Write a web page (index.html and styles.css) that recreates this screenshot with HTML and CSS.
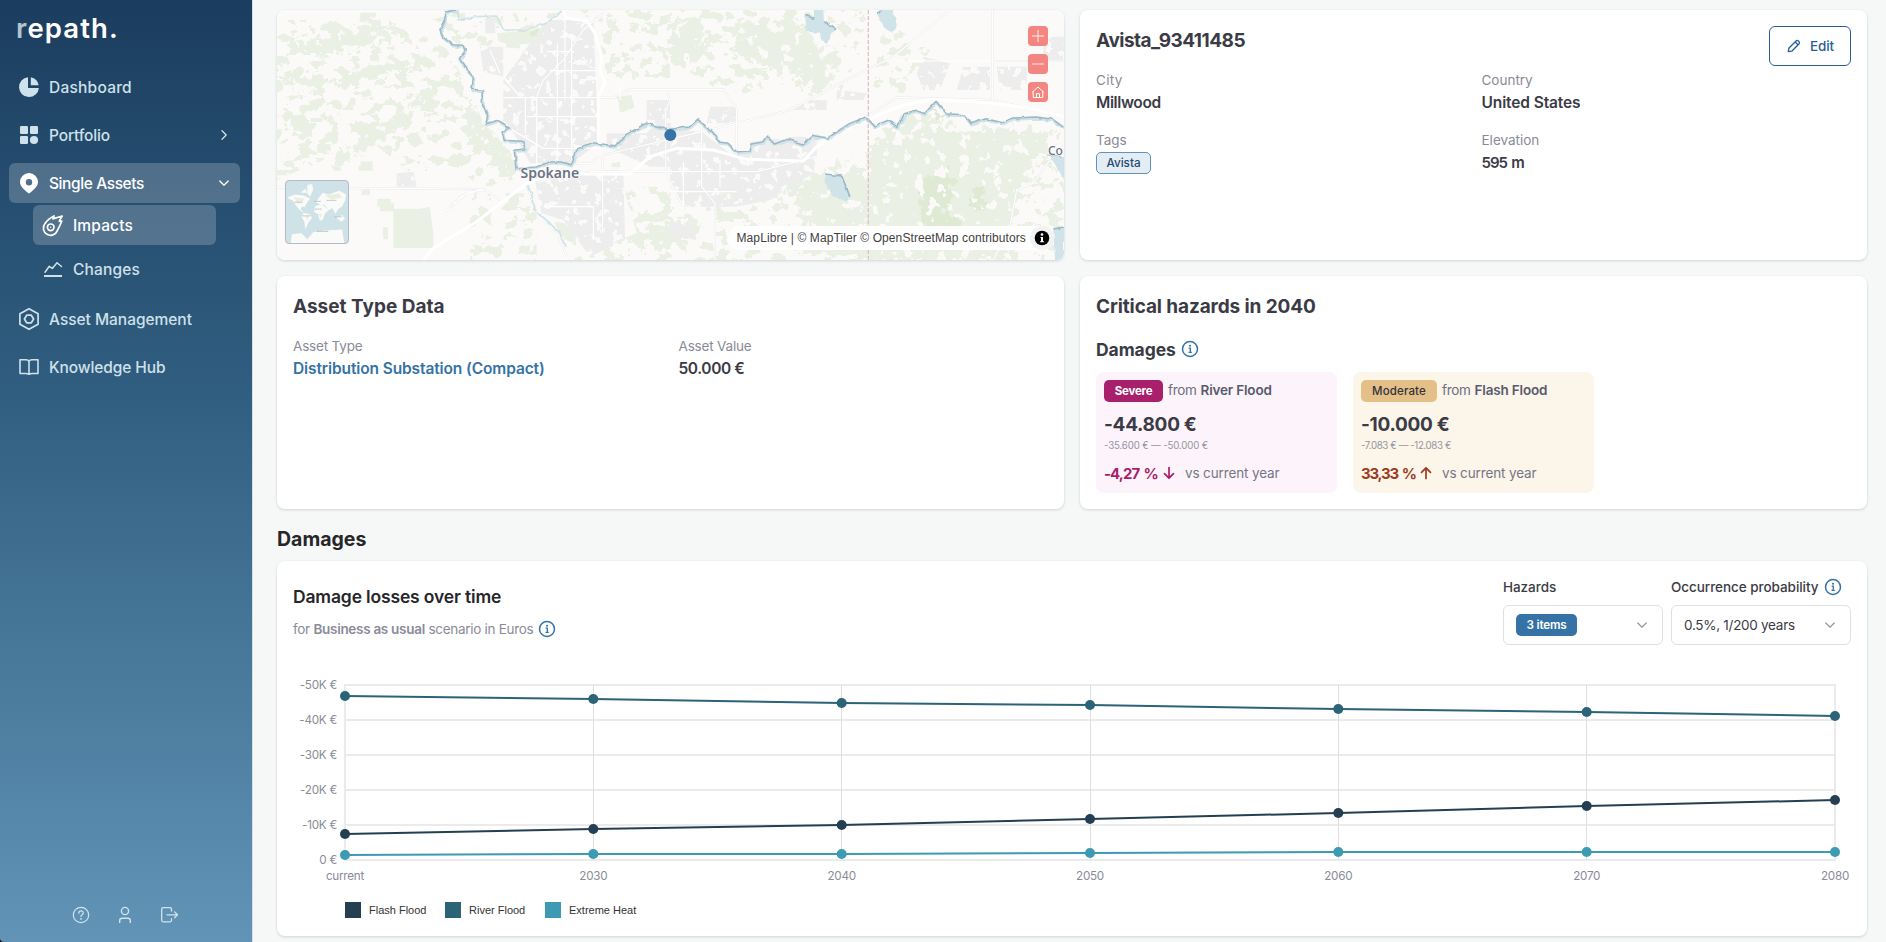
FILE: index.html
```
<!DOCTYPE html>
<html lang="en">
<head>
<meta charset="utf-8">
<title>repath. – Avista_93411485</title>
<link rel="stylesheet" href="styles.css">
</head>
<body>
<svg width="0" height="0" class="defs">
  <symbol id="info" viewBox="0 0 18 18"><circle cx="9" cy="9" r="7.5" fill="none" stroke="currentColor" stroke-width="1.5"/><circle cx="9" cy="5.7" r="1.05" fill="currentColor"/><path d="M7.6 8.1H9.3V12.2M7.5 12.3H10.8" fill="none" stroke="currentColor" stroke-width="1.3"/></symbol>
  <symbol id="chev" viewBox="0 0 12 12"><path d="M1.8 4 6 8.2 10.2 4" fill="none" stroke="currentColor" stroke-width="1.3" stroke-linecap="round" stroke-linejoin="round"/></symbol>
</svg>
<div class="app">
  <div class="side-wrap">
  <nav class="sidebar">
    <div class="logo"><span>r</span>epath.</div>
    <a class="item"><svg class="ic" viewBox="0 0 20 20"><path d="M9 .2V11H19.9A9.95 9.95 0 1 1 9 .2Z" fill="currentColor"/><path d="M11.8.2A9.9 9.9 0 0 1 19.7 8.3H11.8Z" fill="currentColor"/></svg><span class="n-dash">Dashboard</span></a>
    <a class="item"><svg class="ic" viewBox="0 0 20 20" fill="currentColor"><rect x="1" y="1" width="8" height="8" rx="1.2"/><rect x="11" y="1" width="8" height="8" rx="1.2"/><rect x="1" y="11" width="8" height="8" rx="1.2"/><circle cx="15" cy="15" r="4.1"/></svg><span class="n-port">Portfolio</span><svg class="arrow right"><use href="#chev"/></svg></a>
    <a class="item active"><svg class="ic" viewBox="0 0 20 20"><path fill="currentColor" fill-rule="evenodd" d="M10 0a9 9 0 0 1 9 9c0 5-5.2 8.4-9 11.6C6.200 17.400 1 14 1 9a9 9 0 0 1 9-9Zm0 6a3.200 3.200 0 1 0 0 6.400A3.200 3.200 0 0 0 10 6Z"/></svg><span class="n-single">Single Assets</span><svg class="arrow"><use href="#chev"/></svg></a>
    <a class="item sub active first"><svg class="ic" viewBox="0 0 20 20" fill="none" stroke="currentColor" stroke-width="1.7" stroke-linejoin="round"><path d="M2 8.500C4 5.300 7.500 2.600 11 .9L9.900 3.900 19.200 1 16.200 6.100 18.800 6C17.500 9.500 16 12.500 14.300 15.600A7.200 7.200 0 1 1 2 8.500Z"/><circle cx="7.700" cy="12.300" r="3.300"/><circle cx="7.700" cy="12.300" r=".7" fill="currentColor" stroke="none"/></svg><span class="n-imp">Impacts</span></a>
    <a class="item sub"><svg class="ic" viewBox="0 0 20 20" fill="none" stroke="currentColor"><path stroke-width="1.500" stroke-linejoin="round" stroke-linecap="round" d="M2 13.200 6.300 7.300 9.300 9.400 14 3.700 18.500 7.500"/><path stroke-width="2" d="M1 17H19"/></svg><span class="n-imp">Changes</span></a>
    <a class="item after"><svg class="ic" viewBox="0 0 20 20" fill="none" stroke="currentColor" stroke-width="1.700" stroke-linejoin="round"><path d="M10-.3 19.100 4.800V15.200L10 20.300.9 15.200V4.800Z"/><path d="M7.700 6.200H12.300L14.600 10 12.300 13.800H7.700L5.400 10Z"/></svg><span class="n-am">Asset Management</span></a>
    <a class="item"><svg class="ic" viewBox="0 0 20 20" fill="none" stroke="currentColor" stroke-width="1.600" stroke-linejoin="round"><path d="M10 4.500V17.300C9 16.700 8 16.500 6.500 16.500H1V2.800H7C8.500 2.800 9.500 3.300 10 4.500 10.500 3.300 11.500 2.800 13 2.800H19V16.500H13.500C12 16.500 11 16.700 10 17.300"/></svg><span class="n-kh">Knowledge Hub</span></a>
    <div class="foot">
      <svg viewBox="0 0 18 18" fill="none" stroke="currentColor" stroke-width="1.200"><circle cx="9" cy="9" r="7.700"/><path d="M6.800 7.200C6.800 4 11.500 4.300 11.300 6.900 11.200 8.600 9 8.400 9 10.600" stroke-linecap="round"/><circle cx="9" cy="12.900" r=".9" fill="currentColor" stroke="none"/></svg>
      <svg viewBox="0 0 18 18" fill="none" stroke="currentColor" stroke-width="1.400"><circle cx="9" cy="5" r="3.600"/><path d="M3.700 17V14.500Q3.700 12.200 6 12.200H12Q14.300 12.200 14.300 14.500V17"/></svg>
      <svg viewBox="0 0 18 18" fill="none" stroke="currentColor" stroke-width="1.300" stroke-linecap="round" stroke-linejoin="round"><path d="M11.500 5V3.200Q11.500 1.700 10 1.700H3.200Q1.700 1.700 1.700 3.200V14.300Q1.700 15.800 3.200 15.800H10Q11.500 15.800 11.500 14.300V12.600M7 8.800H17.500M14.600 5.900 17.500 8.800 14.600 11.700"/></svg>
    </div>
  </nav>
  </div>

  <main>
    <section class="grid">
      <div class="card map">
        <svg class="map-svg" viewBox="21 30 2361 750" preserveAspectRatio="none">
          <defs>
            <filter id="rough" x="-5%" y="-5%" width="110%" height="110%"><feTurbulence type="fractalNoise" baseFrequency=".045" numOctaves="3" seed="4"/><feDisplacementMap in="SourceGraphic" scale="60" xChannelSelector="R" yChannelSelector="G" result="d"/><feTurbulence type="fractalNoise" baseFrequency=".03" numOctaves="3" seed="22"/><feColorMatrix values="0 0 0 0 0  0 0 0 0 0  0 0 0 0 0  60 0 0 0 -22" result="m"/><feComposite in="d" in2="m" operator="in"/></filter>
            <filter id="wiggle" x="-5%" y="-5%" width="110%" height="110%"><feTurbulence type="fractalNoise" baseFrequency=".04" numOctaves="2" seed="9"/><feDisplacementMap in="SourceGraphic" scale="12" xChannelSelector="R" yChannelSelector="G"/></filter>
            <filter id="scatter" x="0" y="0" width="100%" height="100%"><feTurbulence type="fractalNoise" baseFrequency=".024 .03" numOctaves="4" seed="12"/><feColorMatrix values="0 0 0 0 0  0 0 0 0 0  0 0 0 0 0  60 0 0 0 -33.5" result="m"/><feComposite in="SourceGraphic" in2="m" operator="in"/></filter>
            <filter id="blocks" x="0" y="0" width="100%" height="100%"><feTurbulence type="fractalNoise" baseFrequency=".04" numOctaves="3" seed="31"/><feColorMatrix values="0 0 0 0 0  0 0 0 0 0  0 0 0 0 0  0 60 0 0 -22" result="m"/><feComposite in="SourceGraphic" in2="m" operator="in"/></filter>
          </defs>
          <rect x="21" y="30" width="2361" height="750" fill="#fbfaf9"/>
          <g fill="#eaf0e3" filter="url(#scatter)">
            <path d="M21 60H320L520 130 600 270 640 370 700 420 740 520 640 570 560 500 420 520 300 420 21 540Z"/>
            <path d="M480 60 560 40 860 40 800 150 560 130Z"/><path d="M900 30H1200V240H1010L980 80Z"/><path d="M1200 30H1790V120L1700 300 1550 250 1380 290 1200 180Z"/>
            <path d="M600 580H800V780H600Z"/><path d="M1060 560H1400L1460 780H900L1100 700Z"/><path d="M1400 540H1800V780H1360Z"/><path d="M1840 60 1980 150 1900 280 1810 260Z"/><path d="M2180 470H2382V780H2180Z"/>
          </g>
          <g fill="#eaf0e3" filter="url(#rough)">
            <path d="M21 230 110 225 190 235 260 220 330 192 450 192 450 210 340 222 260 245 120 260 21 240Z"/>
            <path d="M80 110 180 120 310 60 380 80 300 105 380 100 350 130 200 150 160 175 90 150Z"/>
            <path d="M300 390 390 350 420 300 520 245 500 290 430 330 420 380 330 420 290 450 200 500 190 470Z"/>
            <path d="M600 300 650 380 700 430 740 500 700 540 660 460 600 440 570 350Z"/>
            <path d="M1820 420 1900 350 1990 350 2060 390 2240 380 2360 400 2330 460 2290 520 2240 570 2210 690 2240 780 1790 780 1780 650 1600 620 1590 550 1700 490 1790 500Z"/>
            <path d="M1800 440 1900 370 1990 360 2060 400 2240 390 2320 420 2290 500 2240 560 2210 690 2140 780 1800 780 1790 600Z"/>
            <path d="M1420 70 1570 50 1640 130 1690 240 1620 290 1560 200 1440 190 1380 140Z"/><path d="M1200 60 1290 50 1320 140 1260 200 1200 180Z"/>
            <path d="M1130 680 1230 660 1240 740 1140 750Z"/><path d="M1560 560 1640 540 1700 600 1790 640 1790 780 1640 760Z"/>
          </g>
          <path fill="#eaf0e3" d="M370 626H450L478 620 482 640 490 700V744H370ZM62 346H88V362H102V392H70V378H62ZM142 432H182V452H160V458H142ZM272 484H308V512H266V498H272ZM322 596H362V610H372V634H330V620H322ZM90 372H126V410H98V396H90ZM272 38H318V50H300V62H268ZM122 354H158V366H122ZM190 500H212V512H190ZM240 294H256V316H236V304H240ZM338 682H354V718H340ZM22 510H64V518H50V526H22ZM680 100 760 92 820 84V112L790 130 720 136 686 124Z"/>
          <g fill="#eaf0e3" filter="url(#wiggle)"><path d="M850 665 885 670 915 690 918 735 890 720 870 700ZM1040 290 1085 285 1090 325 1050 335ZM1022 488H1050V502H1026Z"/></g>
          <path fill="#dfead4" filter="url(#rough)" d="M1960 540 2030 500 2050 570 2010 680 1950 690ZM1980 320 2020 340 2000 370ZM2110 560 2150 560 2140 620 2100 620ZM1980 650 2080 650 2060 740 1980 720ZM780 90 810 85 805 110 785 112Z"/>
          <g fill="#ededee" filter="url(#blocks)">
            <path d="M630 140H700V230L640 215ZM646 54H676V100H646Z"/><path d="M700 240 780 130 830 60 970 60 985 430 905 490 780 490 720 380 700 360Z"/>
            <path d="M790 520 1060 510 1065 720 960 770 880 660 815 640Z"/><path d="M1010 400 1130 400 1200 330 1210 500 1140 500 1010 440Z"/><path d="M1130 300H1200V370H1130Z"/>
            <path d="M1200 380 1300 400 1380 460 1640 460 1630 520 1500 600 1400 620H1240L1200 540Z"/><path d="M1320 320 1400 320 1400 370 1310 370ZM1440 425 1560 410 1640 410 1640 470 1440 470Z"/>
            <path d="M1960 170 2040 190 2010 270H1960L1940 220ZM2080 200 2160 200V270H2060ZM2180 200 2270 200V270H2190ZM1700 270 1790 280 1780 300H1700ZM1620 300H1670V330H1570ZM2320 110H2382V180H2320Z"/><path d="M1200 650 1260 650 1280 720 1200 710ZM380 520 430 515 440 560H380ZM275 568H300V585H275Z"/>
          </g>
          <g fill="none" stroke="#e8e8e8" stroke-width="6"><path d="M21 563 620 567 640 572 600 575 550 610 525 635 545 625 570 590 640 565 690 600"/><path d="M800 293H1030L1080 268H1360L1400 325V465"/><path d="M1000 40 940 90 880 180 820 240 800 290"/><path d="M985 470 960 490 900 492"/><path d="M1190 275 1200 300 1187 330V520L1240 620M1000 465 1400 370 1560 330 1700 255 1870 170 2040 30M2168 30V300M2170 183H2382M1790 350 1880 292 2170 300 2382 350"/><path d="M1200 515H1460L1640 470M1295 380V560L1335 610V780M960 515H1200M2340 480 2290 550 2240 570 2220 680 2170 780M770 555 800 640 870 720 890 770M998 470V700"/></g>
          <g fill="none" stroke="#fff" stroke-width="3.500"><path d="M21 563 620 567 640 572 600 575 550 610 525 635 545 625 570 590 640 565 690 600M800 293H1030L1080 268H1360L1400 325V465M1000 40 940 90 880 180 820 240 800 290V500M862 130V495M700 293H800M770 350H980M905 100V480M985 470 960 490 900 492M1190 275 1200 300 1187 330V520L1240 620M1000 465 1400 370 1560 330 1700 255 1870 170 2040 30M2168 30V300M2170 183H2382M1790 350 1880 292 2170 300 2382 350M1200 515H1460L1640 470M1295 380V560L1335 610V780M960 515H1200M2340 480 2290 550 2240 570 2220 680 2170 780M770 555 800 640 870 720 890 770M998 470V700M660 150 690 220M700 230 750 290M710 380 820 445H1000M820 620H970V720M1240 485V620M1200 575H1400M830 155H900M840 212H980M766 290V400M1050 300V260M1880 183H2160M885 50V300M1350 480V560"/></g>
          <g fill="none" stroke="#fff" stroke-width="9" stroke-linejoin="round"><path d="M878 30 890 55 950 62 975 100 995 170 990 210 1005 250 985 290V430"/><path d="M460 780 490 745 620 665 770 550 850 522H1080L1140 470 1220 445 1330 450 1430 478 1600 483 1640 440 1710 395 1800 355 1900 315 1990 298 2160 308 2280 325 2382 350"/></g>
          <g filter="url(#wiggle)" fill="none" stroke-linejoin="round">
            <path stroke="#cfe3e8" stroke-width="9" d="M560 33 530 40 525 70 512 95 520 115 550 138 580 140 588 155 570 180 590 210 612 235 608 272 638 275 640 320 655 350 650 375 685 365 720 385 698 400 705 425 760 428 768 450 735 455 740 510 800 505 840 490 875 490 905 498 925 450 970 432 1040 442 1070 408 1130 374 1200 392 1260 385 1285 362 1330 400 1350 430 1375 433 1405 462 1438 460 1445 436 1480 430 1492 412 1515 436 1555 422 1600 436 1630 410 1675 418 1740 375 1790 355 1815 382 1855 365 1885 385 1905 345 1940 335 1965 345 2000 308 2030 345 2085 348 2105 375 2150 360 2200 372 2230 358 2300 355 2350 362 2382 385"/>
            <path stroke="#9bb8c6" stroke-width="4.500" transform="translate(-2 -4)" d="M560 33 530 40 525 70 512 95 520 115 550 138 580 140 588 155 570 180 590 210 612 235 608 272 638 275 640 320 655 350 650 375 685 365 720 385 698 400 705 425 760 428 768 450 735 455 740 510 800 505 840 490 875 490 905 498 925 450 970 432 1040 442 1070 408 1130 374 1200 392 1260 385 1285 362 1330 400 1350 430 1375 433 1405 462 1438 460 1445 436 1480 430 1492 412 1515 436 1555 422 1600 436 1630 410 1675 418 1740 375 1790 355 1815 382 1855 365 1885 385 1905 345 1940 335 1965 345 2000 308 2030 345 2085 348 2105 375 2150 360 2200 372 2230 358 2300 355 2350 362 2382 385"/>
            <path stroke="#cfe3e8" stroke-width="5" d="M560 30 565 60 620 50 680 48 700 90 760 90 830 70 875 33M770 555 785 580 795 630 840 670 870 700 885 740"/>
            <path fill="#cfe3e8" d="M1605 45 1630 55 1628 30H1660L1662 65 1700 90 1680 100 1672 132 1655 125 1650 98 1610 95ZM1820 40 1835 30H1870L1882 80 1870 95 1845 85ZM1665 522 1715 528 1740 590 1730 605 1685 585 1668 555ZM2340 470H2382V540L2360 500ZM2350 690 2382 684V780H2355Z"/>
            <path stroke="#9bb8c6" stroke-width="5" d="M1605 45 1630 55M1662 65 1700 90M1820 40 1835 30M1665 522 1715 528 1740 590M2335 465 2375 470M2350 690 2382 684"/>
          </g>
          <path d="M1795 30V780" stroke="#dfc3c8" stroke-width="4" stroke-dasharray="13 5"/>
          <circle cx="1201" cy="405" r="18" fill="#3572a6"/>
        </svg>
        <span class="place spokane">Spokane</span>
        <span class="place coeur">Co</span>
        <div class="mini"><svg viewBox="0 0 64 64"><g fill="#fafaf8"><path d="M3 16 10 14 18 15 25 18 22 22 19 27 17 26 15 29 19 33 14 30 10 25 7 20 2 18ZM15 12 20 8 22 12ZM22 4 27 3 28 9 25 16 22 13ZM18 33 24 34 27 38 23 43 20 50 19 42 16 37ZM30 26 36 24 41 27 44 30 40 34 38 40 35 41 33 34 29 32ZM31 22 34 17 38 12 44 14 55 10 62 14 61 20 58 26 54 29 51 34 48 28 44 30 40 25 35 24ZM52 38 58 35 61 39 57 42ZM5 64 6 55 16 54 22 60 28 53 40 51 58 50 60 64Z"/></g><path fill="#e4ecd9" d="M8 17 19 18 17 22 11 22ZM20 36 24 37 22 40ZM40 15 55 13 58 17 47 19ZM33 34H37L36 38Z" opacity=".8"/><path d="M9 22H17M29 21H36M42 20H52M30 29H37M17 36H25M50 37H58M32 52H44" stroke="#b6b8bc" stroke-width=".9" stroke-dasharray="2 .4"/></svg></div>
        <div class="ctrls">
          <button><svg viewBox="0 0 20 20"><path d="M4 10H16M10 4V16" stroke="#fff" stroke-width="1" opacity=".85"/></svg></button>
          <button><svg viewBox="0 0 20 20"><path d="M4 10H16" stroke="#fff" stroke-width="1" opacity=".85"/></svg></button>
          <button><svg viewBox="0 0 20 20" fill="none" stroke="#fff" stroke-width="1"><path d="M4.200 10.200 10 5 15.800 10.200M5.200 9.500V15.500H14.800V9.500M8.500 15.500V11.700H11.500V15.500"/></svg></button>
        </div>
        <div class="attr"><span>MapLibre | © MapTiler © OpenStreetMap contributors</span><i><svg viewBox="0 0 24 24"><circle cx="12" cy="12" r="7.300"/><circle cx="12" cy="8.500" r="1.300" fill="#fff"/><path d="M10.500 10.900H13V15H13.800V16.200H10.300V15H11V12H10.500Z" fill="#fff"/></svg></i></div>
      </div>

      <div class="card">
        <div class="head"><h2 class="h-av">Avista_93411485</h2><button class="edit"><svg viewBox="0 0 14 14" fill="none" stroke="currentColor" stroke-width="1.300" stroke-linejoin="round"><path d="M1.300 12.700 1.800 9.300 9.300 1.800Q10.400.9 11.700 2.200 13.100 3.600 12.200 4.700L4.700 12.200ZM8.200 3 11 5.800"/></svg><span>Edit</span></button></div>
        <div class="fields">
          <div><label class="l-city">City</label><b class="v-mill">Millwood</b></div>
          <div><label>Country</label><b class="v-us">United States</b></div>
          <div><label class="l-tags">Tags</label><span class="tag">Avista</span></div>
          <div><label>Elevation</label><b class="v-num">595 m</b></div>
        </div>
      </div>

      <div class="card">
        <div class="head"><h2>Asset Type Data</h2></div>
        <div class="fields">
          <div><label class="l-at">Asset Type</label><b class="link">Distribution Substation (Compact)</b></div>
          <div><label class="l-at">Asset Value</label><b class="v-eur">50.000 €</b></div>
        </div>
      </div>

      <div class="card">
        <div class="head"><h2 class="h-crit">Critical hazards in 2040</h2></div>
        <h3>Damages<svg class="info"><use href="#info"/></svg></h3>
        <div class="hazards">
          <div class="hz severe">
            <p class="row"><span class="lvl">Severe</span><span class="from">from</span><strong>River Flood</strong></p>
            <p class="amount">-44.800 €</p>
            <p class="range">-35.600 € — -50.000 €</p>
            <p class="delta"><b>-4,27 %</b><svg viewBox="0 0 12 14"><path d="M6 1.500V12M1.500 7.700 6 12.200 10.500 7.700"/></svg><span>vs current year</span></p>
          </div>
          <div class="hz moderate">
            <p class="row"><span class="lvl">Moderate</span><span class="from">from</span><strong>Flash Flood</strong></p>
            <p class="amount">-10.000 €</p>
            <p class="range r2">-7.083 € — -12.083 €</p>
            <p class="delta"><b class="d2">33,33 %</b><svg viewBox="0 0 12 14"><path d="M6 12.500V2M1.500 6.300 6 1.800 10.500 6.300"/></svg><span>vs current year</span></p>
          </div>
        </div>
      </div>
    </section>

    <h1>Damages</h1>

    <section class="card chart-card">
      <div class="chart-head">
        <div class="titles">
          <h4>Damage losses over time</h4>
          <p><span>for <b>Business as usual</b> scenario in Euros</span><svg class="info"><use href="#info"/></svg></p>
        </div>
        <div class="filter f1"><label>Hazards</label><div class="select"><span class="pill">3 items</span><svg><use href="#chev"/></svg></div></div>
        <div class="filter f2"><label class="occ">Occurrence probability<svg class="info"><use href="#info"/></svg></label><div class="select"><span class="val">0.5%, 1/200 years</span><svg><use href="#chev"/></svg></div></div>
      </div>
      <svg class="chart" viewBox="293 670 1574 250">
        <path d="M344 685H1836M344 720H1836M344 755H1836M344 790H1836M344 825H1836M344 860H1836M345 685V860M1835 685V860" stroke="#ebebeb" stroke-width="2"/>
        <path d="M593.500 685V860M841.500 685V860M1090.500 685V860M1338.500 685V860M1586.500 685V860" stroke="#dfdfdf"/>
        <g class="ylab"><text x="337" y="689">-50K €</text><text x="337" y="724">-40K €</text><text x="337" y="759">-30K €</text><text x="337" y="794">-20K €</text><text x="337" y="829">-10K €</text><text x="337" y="864">0 €</text></g>
        <g class="xlab"><text x="345" y="880">current</text><text x="593.300" y="880">2030</text><text x="841.700" y="880">2040</text><text x="1090" y="880">2050</text><text x="1338.300" y="880">2060</text><text x="1586.700" y="880">2070</text><text x="1835" y="880">2080</text></g>
        <g class="s-heat"><path d="M345 855 593.300 854 841.700 854 1090 853 1338.300 852H1835"/><circle cx="345" cy="855" r="5"/><circle cx="593.300" cy="854" r="5"/><circle cx="841.700" cy="854" r="5"/><circle cx="1090" cy="853" r="5"/><circle cx="1338.300" cy="852" r="5"/><circle cx="1586.700" cy="852" r="5"/><circle cx="1835" cy="852" r="5"/></g>
        <g class="s-river"><path d="M345 696 593.300 699 841.700 703 1090 705 1338.300 709 1586.700 712 1835 716"/><circle cx="345" cy="696" r="5"/><circle cx="593.300" cy="699" r="5"/><circle cx="841.700" cy="703" r="5"/><circle cx="1090" cy="705" r="5"/><circle cx="1338.300" cy="709" r="5"/><circle cx="1586.700" cy="712" r="5"/><circle cx="1835" cy="716" r="5"/></g>
        <g class="s-flash"><path d="M345 834 593.300 829 841.700 825 1090 819 1338.300 813 1586.700 806 1835 800"/><circle cx="345" cy="834" r="5"/><circle cx="593.300" cy="829" r="5"/><circle cx="841.700" cy="825" r="5"/><circle cx="1090" cy="819" r="5"/><circle cx="1338.300" cy="813" r="5"/><circle cx="1586.700" cy="806" r="5"/><circle cx="1835" cy="800" r="5"/></g>
        <g class="legend"><rect x="345" y="902" width="16" height="16" fill="#233f51"/><text x="369" y="914">Flash Flood</text><rect x="445" y="902" width="16" height="16" fill="#2b6377"/><text x="469" y="914">River Flood</text><rect x="545" y="902" width="16" height="16" fill="#3d9ab3"/><text x="569" y="914">Extreme Heat</text></g>
      </svg>
    </section>
  </main>
</div>
</body>
</html>
```
FILE: styles.css
```
*{box-sizing:border-box;margin:0;padding:0}
body{font-family:Inter,"Liberation Sans",sans-serif;background:#f6f8f8;color:#3b3b46;overflow:hidden}
button{font:inherit;border:0;background:none}
.defs{position:absolute}
.app{display:flex;width:1886px;height:942px;overflow:hidden}

.side-wrap{width:253px;flex:none;background:#000}
.sidebar{height:942px;padding:0 12px 0 9px;border-right:1px solid #d9dde6;border-bottom-left-radius:4px;background:linear-gradient(#1b3d5f 0,#315f81 42.500%,#6194b7 100%);display:flex;flex-direction:column}
.logo{height:59px;line-height:57px;padding-left:7px;font-size:27.500px;font-weight:600;letter-spacing:1.100px;color:#fff}
.logo span{color:#b4c4d0}
.item{display:flex;align-items:center;height:40px;margin-top:8px;padding:0 10px;color:#cfe1ea;font-size:15.500px;font-weight:500;border-radius:6px;white-space:nowrap}
.ic{width:20px;height:20px;margin-right:10px;flex:none;overflow:visible}
.active{color:#fff;background:rgba(255,255,255,.2)}
.sub{margin:4px 24px 0 24px;padding:0 10px}
.first{margin-top:2px}
.after{margin-top:10px}
.arrow{width:12px;height:12px;margin-left:auto}
.right{transform:rotate(-90deg)}
.n-dash{letter-spacing:.230px}.n-port{letter-spacing:-.140px}.n-single{letter-spacing:-.400px}.n-imp{letter-spacing:.150px}.n-am{letter-spacing:-.030px}.n-kh{letter-spacing:-.100px}
.foot{margin-top:auto;height:36px;padding-left:63px;display:flex;gap:26px;color:#d3e3ec}
.foot svg{width:18px;height:18px}

main{flex:1;padding:10px 19px 0 24px}
.grid{display:grid;grid-template-columns:1fr 1fr;grid-template-rows:250px 233px;gap:16px}
.card{position:relative;background:#fff;border-radius:8px;padding:16px;box-shadow:0 1px 3px rgba(40,50,60,.18)}
.head{display:flex;justify-content:space-between;height:28px}
h2{font-size:19px;line-height:30px;font-weight:700}
.h-av{letter-spacing:-.520px}.h-crit{letter-spacing:-.110px}
.edit{display:flex;align-items:center;gap:9px;width:82px;height:40px;padding-left:17px;border:1px solid #295f96;border-radius:6px;color:#295f96;font-size:13.500px;font-weight:500}
.edit span{letter-spacing:-.100px}
.edit svg{width:14px;height:14px}
.fields{display:grid;grid-template-columns:1fr 1fr;column-gap:16px;row-gap:13px;margin-top:15px}
.fields label{display:block;font-size:13.500px;line-height:22px;height:21px;color:#8a8b98}
.fields b{display:block;font-size:15.500px;line-height:26px;font-weight:600}
.l-city{letter-spacing:.300px}.l-at{letter-spacing:-.180px}
.v-mill{letter-spacing:-.380px}.v-us{letter-spacing:-.120px}.fields .v-num{font-size:15px;letter-spacing:-1px;word-spacing:1.500px}.v-eur{letter-spacing:-.400px}
.fields .link{color:#3572a6;letter-spacing:-.110px}
.tag{display:inline-block;margin-top:2px;height:22px;width:55px;line-height:20px;text-align:center;border:1px solid #5e94b9;border-radius:5px;background:#e4edf3;color:#1f4a72;font-size:11.700px;font-weight:500;vertical-align:top}

.map{padding:0;overflow:hidden}
.map-svg{display:block;width:787px;height:250px}
.place{position:absolute;font:600 14px "Noto Sans",sans-serif;color:#6b7383;text-shadow:0 0 2px #fff,0 0 2px #fff,0 0 2px #fff;white-space:nowrap}
.spokane{left:243.500px;top:153px}
.coeur{left:771px;top:132px;font-weight:500;font-size:12px}
.mini{position:absolute;left:8px;top:170px;width:64px;height:64px;border:1px solid #b7b9c7;border-radius:4px;background:#cfe2e7;overflow:hidden}
.mini svg{display:block;width:62px;height:62px}
.ctrls{position:absolute;left:751px;top:16px;display:grid;gap:8px}
.ctrls button{width:20px;height:20px;border-radius:4px;background:#f38680}
.ctrls svg{display:block}
.attr{position:absolute;left:451px;top:216px;height:24px;width:326px;padding-left:8.500px;border-radius:12px;background:#fff;font:12px/24px "Liberation Sans",Arial,sans-serif;letter-spacing:.100px;color:#404040;white-space:nowrap}
.attr i{position:absolute;right:0;top:0;width:24px;height:24px;border-radius:12px;background:#f2f2f2}
.attr svg{display:block}

h3{display:flex;align-items:center;height:24px;margin-top:17px;font-size:17.500px;font-weight:700;letter-spacing:-.050px}
.info{width:18px;height:18px;color:#3572a6;flex:none}
h3 .info{margin-left:5px}
.hazards{display:grid;grid-template-columns:repeat(3,1fr);gap:16px;margin-top:11px}
.hz{height:121px;border-radius:8px;padding:8px}
.severe{background:#fdf4fb}.moderate{background:#fcf5ea}
.row{display:flex;height:22px;line-height:21px;font-size:13.500px;color:#6d6f80}
.row strong{font-weight:600;color:#585b6e;letter-spacing:-.180px}
.from{margin:0 4px 0 5px;letter-spacing:-.300px}
.lvl{border-radius:5px;height:22px;width:59px;line-height:22px;text-align:center;font-size:11.500px;font-weight:700;background:#a81f6c;color:#fff;letter-spacing:-.250px}
.moderate .lvl{width:76px;font-weight:500;background:#e4bf87;color:#33333d;letter-spacing:.130px}
.amount{margin-top:9px;font-size:19px;line-height:28px;font-weight:700;letter-spacing:-.300px}
.range{margin-top:-1px;font-size:9.700px;line-height:16px;color:#9394a1;letter-spacing:-.160px}
.r2{letter-spacing:-.380px}
.delta{display:flex;align-items:center;margin-top:9px;height:20px;font-size:13.500px;color:#757786;letter-spacing:-.130px}
.delta b{font-size:15px;font-weight:700;letter-spacing:-.900px;word-spacing:1.500px;width:59px;white-space:nowrap;color:#a81f6c}
.delta .d2{letter-spacing:-1.250px}
.delta svg{width:12px;height:14px;margin-right:10px;fill:none;stroke:#a81f6c;stroke-width:1.700;stroke-linecap:round;stroke-linejoin:round}
.moderate .delta b{color:#9c3c1e}.moderate svg{stroke:#9c3c1e}

h1{height:52px;line-height:61px;font-size:19.500px;font-weight:700;color:#26262b}
.chart-card{height:375px;padding:16px 0 0 16px}
.chart-head{display:flex;height:93px;padding-right:16px}
.titles{flex:1}
h4{margin-top:6px;font-size:17.500px;line-height:28px;font-weight:600;color:#26262b;letter-spacing:-.160px}
.titles p{display:flex;align-items:center;margin-top:9px;height:18px;font-size:13.500px;color:#8a8b98;letter-spacing:-.290px}
.titles p b{font-weight:600}
.titles .info{margin-left:5px}
.filter label{display:flex;align-items:center;height:20px;font-size:13.500px;font-weight:500;letter-spacing:-.050px}
.occ .info{margin-left:6px}
.f1{width:160px;margin-right:8px}
.f2{width:180px}
.select{display:flex;align-items:center;justify-content:space-between;margin-top:8px;height:40px;padding:0 14px 0 12px;border:1px solid #e0e0e3;border-radius:6px}
.select svg{width:12px;height:12px;color:#9a9aa3}
.pill{width:61px;height:22px;line-height:22px;text-align:center;border-radius:5px;background:#3572a6;color:#fff;font-size:11.700px;font-weight:600;letter-spacing:-.200px}
.val{font-size:13.500px;letter-spacing:-.280px}
.chart{display:block;width:1574px;height:250px}
.chart text{font-size:11.700px;fill:#8a8b98;letter-spacing:-.250px}
.ylab{text-anchor:end}.xlab{text-anchor:middle}
.chart .legend text{font:11px "Liberation Sans",Arial,sans-serif;letter-spacing:0;fill:#333}
.s-heat path,.s-river path,.s-flash path{fill:none;stroke-width:2}
.s-heat{fill:#3d9ab3;stroke:#3d9ab3}.s-river{fill:#2b6377;stroke:#2b6377}.s-flash{fill:#233f51;stroke:#233f51}
.chart circle{stroke:none}
```
